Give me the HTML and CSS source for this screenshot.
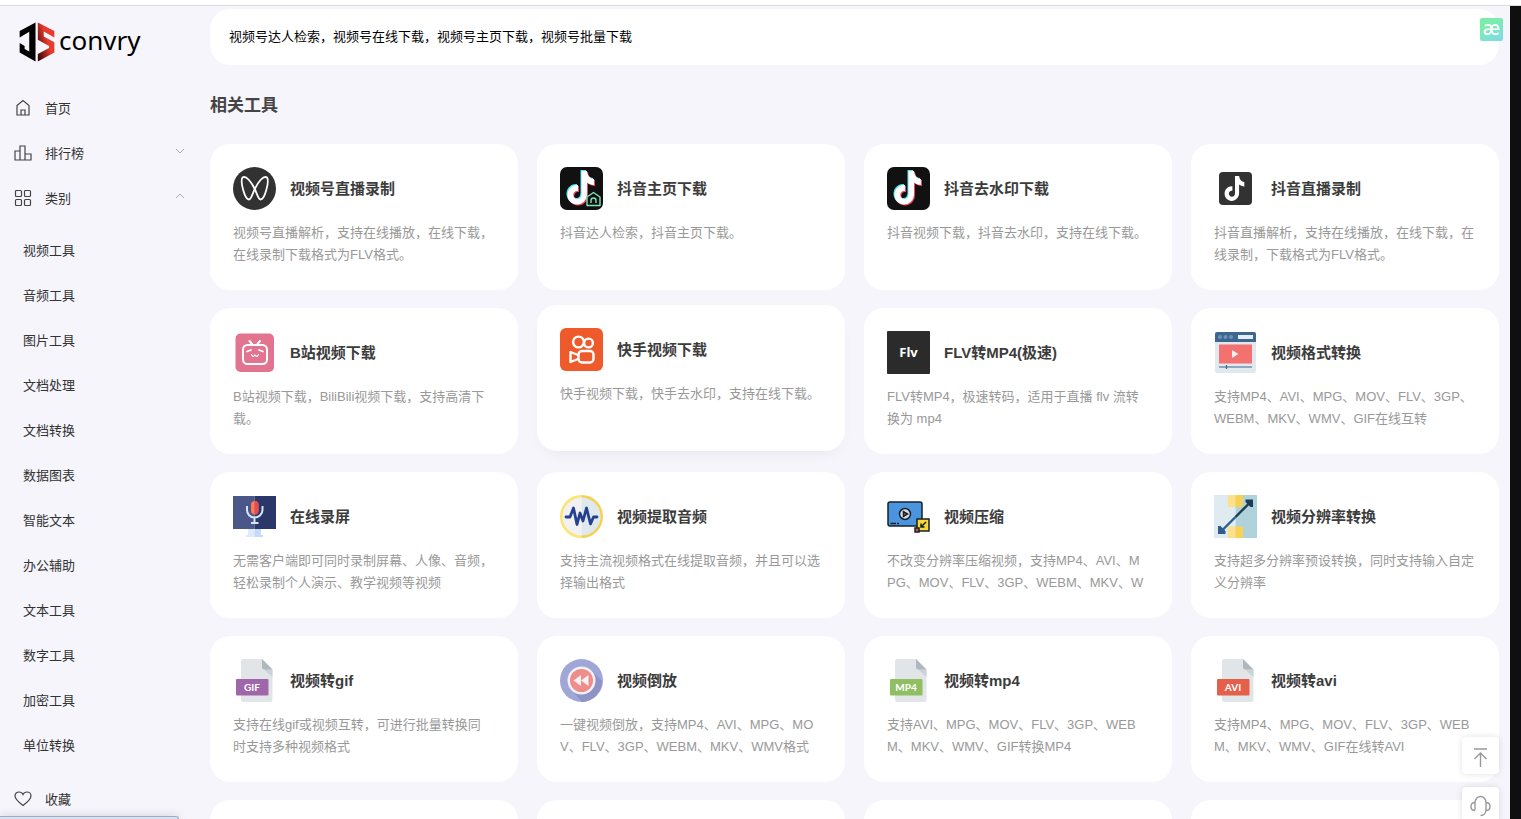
FILE: index.html
```html
<!DOCTYPE html>
<html lang="zh-CN">
<head>
    <meta charset="UTF-8">
    <meta name="viewport" content="width=device-width, initial-scale=1.0">
    <title>convry</title>
    <link rel="stylesheet" href="styles.css">
</head>
<body>

    <!-- Shared shapes -->
    <svg class="defs" width="0" height="0" aria-hidden="true">
        <symbol id="note" viewBox="0 0 43 43">
            <path d="M21.5 4H27C27.5 9 30 11.5 34 12V18C31 18 29 17 27 15.5V27C27 33 22.5 37.5 17 37.5C11.5 37.5 7.5 33 7.5 28C7.5 22 12 17.5 18 18V24C15 23.5 13.3 25.5 13.3 28C13.3 30 15 32 17.3 32C20 32 21.5 30 21.5 27Z"/>
        </symbol>
        <symbol id="douyin" viewBox="0 0 43 43">
            <rect width="43" height="43" rx="7" fill="#111"/>
            <use href="#note" x="-1" y="-1" width="43" height="43" fill="#4de8f4"/>
            <use href="#note" x="1" y="1" width="43" height="43" fill="#f3445a"/>
            <use href="#note" width="43" height="43" fill="#fff"/>
        </symbol>
        <symbol id="file" viewBox="0 0 43 43">
            <path d="M8.500 0H29L39.500 10.500V40.500Q39.500 43 37 43H10.500Q8 43 8 40.500V2.500Q8 0 10.500 0Z" fill="#e2e5e7"/>
            <path d="M31 10.500L39.500 18V10.500Z" fill="#cad1d8"/>
            <path d="M29 0L39.500 10.500H31.500Q29 10.500 29 8Z" fill="#b0b7bd"/>
        </symbol>
    </svg>

    <div class="topline"></div>
    <div class="app">
        <aside class="sidebar">
            <a class="logo" href="#">
                <svg width="36" height="40" viewBox="58 64 109 120">
                    <defs>
                        <linearGradient id="logoRed" x1="1" y1="0.3" x2="0" y2="1">
                            <stop offset="0.35" stop-color="#e93b2c"/>
                            <stop offset="1" stop-color="#200"/>
                        </linearGradient>
                    </defs>
                    <path d="M60 91L108 65V183L60 156V127L75 136V145L89 153V93L60 110Z" fill="#000"/>
                    <path d="M115 65L165 91V110L133 92V107L165 125V156L115 183V160L149 142V136L115 117Z" fill="url(#logoRed)"/>
                </svg>
                <span>convry</span>
            </a>
            <nav class="menu">
                <a class="menu-item" href="#">
                    <svg class="menu-icon" viewBox="0 0 18 18"><path d="M3 6.5L9 1.500L15 6.500V16H3ZM7 16V11H11V16"/></svg>
                    首页
                </a>
                <a class="menu-item" href="#">
                    <svg class="menu-icon" viewBox="0 0 18 18"><path d="M1 7H6V16H1ZM6 2H11V16H6ZM11 10H17V16H11Z"/></svg>
                    排行榜
                    <svg class="arrow" viewBox="0 0 10 6"><path d="M1 1L5 5L9 1"/></svg>
                </a>
                <a class="menu-item" href="#">
                    <svg class="menu-icon" viewBox="0 0 18 18"><rect x="1.500" y="1.500" width="6" height="6" rx="1"/><rect x="10.500" y="1.500" width="6" height="6" rx="1"/><rect x="1.500" y="10.500" width="6" height="6" rx="1"/><rect x="10.500" y="10.500" width="6" height="6" rx="1"/></svg>
                    类别
                    <svg class="arrow" viewBox="0 0 10 6"><path d="M1 5L5 1L9 5"/></svg>
                </a>
                <div class="submenu">
                    <a href="#">视频工具</a>
                    <a href="#">音频工具</a>
                    <a href="#">图片工具</a>
                    <a href="#">文档处理</a>
                    <a href="#">文档转换</a>
                    <a href="#">数据图表</a>
                    <a href="#">智能文本</a>
                    <a href="#">办公辅助</a>
                    <a href="#">文本工具</a>
                    <a href="#">数字工具</a>
                    <a href="#">加密工具</a>
                    <a href="#">单位转换</a>
                </div>
                <a class="menu-item" href="#">
                    <svg class="menu-icon" viewBox="0 0 18 18"><path d="M9 15.5C5 12.5 1 9.5 1 6C1 3.5 3 2 5 2C7 2 8.3 3 9 4.5C9.7 3 11 2 13 2C15 2 17 3.5 17 6C17 9.5 13 12.5 9 15.5Z"/></svg>
                    收藏
                </a>
            </nav>
        </aside>

        <main class="content">
            <div class="intro">视频号达人检索，视频号在线下载，视频号主页下载，视频号批量下载</div>
            <h2>相关工具</h2>
            <div class="tools">
                <a class="card" href="#">
                    <div class="card-head">
                        <svg class="card-icon" viewBox="0 0 43 43">
                            <circle cx="21.5" cy="21.5" r="21.5" fill="#323232"/>
                            <path d="M9.5 10.5C13 8 18.5 15 22 22.5C24.5 28 25.5 32.5 27.5 32.5C32 32.5 36.5 14 34 10.5C30.5 8 25 15 21.5 22.5C19 28 18 32.5 16 32.5C11.5 32.5 7 14 9.5 10.5Z" fill="none" stroke="#fff" stroke-width="1.8"/>
                        </svg>
                        <h3>视频号直播录制</h3>
                    </div>
                    <p>视频号直播解析，支持在线播放，在线下载，在线录制下载格式为FLV格式。</p>
                </a>
                <a class="card" href="#">
                    <div class="card-head">
                        <svg class="card-icon" viewBox="0 0 43 43">
                            <use href="#douyin"/>
                            <path d="M27 30L33.5 25.5L40 30V38.5H27Z" fill="#111" stroke="#7fe3b4" stroke-width="1.4" stroke-linejoin="round"/>
                            <path d="M31 36V33.5Q31 31 33.5 31Q36 31 36 33.5V36" fill="none" stroke="#7fe3b4" stroke-width="1.4"/>
                        </svg>
                        <h3>抖音主页下载</h3>
                    </div>
                    <p>抖音达人检索，抖音主页下载。</p>
                </a>
                <a class="card" href="#">
                    <div class="card-head">
                        <svg class="card-icon" viewBox="0 0 43 43"><use href="#douyin"/></svg>
                        <h3>抖音去水印下载</h3>
                    </div>
                    <p>抖音视频下载，抖音去水印，支持在线下载。</p>
                </a>
                <a class="card" href="#">
                    <div class="card-head">
                        <svg class="card-icon" viewBox="0 0 43 43">
                            <rect x="5" y="5" width="33" height="33" rx="4" fill="#323232"/>
                            <use href="#note" x="5" y="6" width="32" height="32" fill="#fff"/>
                        </svg>
                        <h3>抖音直播录制</h3>
                    </div>
                    <p>抖音直播解析，支持在线播放，在线下载，在线录制，下载格式为FLV格式。</p>
                </a>

                <a class="card" href="#">
                    <div class="card-head">
                        <svg class="card-icon" viewBox="0 0 43 43">
                            <rect x="2.5" y="2.5" width="38.5" height="38.5" rx="5" fill="#e2748f"/>
                            <g fill="none" stroke="#fff" stroke-width="2" stroke-linecap="round" stroke-linejoin="round">
                                <rect x="10" y="14" width="24" height="19" rx="4.5"/>
                                <path d="M16.5 10L19 13M27 10L24.5 13"/>
                                <path d="M14 20.5L18 19M30 20.5L26 19" stroke-width="1.8"/>
                                <path d="M18.5 23.5Q20 27 22 24Q24 27 25.5 23.5" stroke-width="1.2"/>
                            </g>
                        </svg>
                        <h3>B站视频下载</h3>
                    </div>
                    <p>B站视频下载，BiliBili视频下载，支持高清下载。</p>
                </a>
                <a class="card active" href="#">
                    <div class="card-head">
                        <svg class="card-icon" viewBox="0 0 43 43">
                            <rect width="43" height="43" rx="6" fill="#ee5a2a"/>
                            <g fill="none" stroke="#fff" stroke-width="2.4" stroke-linejoin="round">
                                <circle cx="18.5" cy="14" r="5.4"/>
                                <circle cx="28.5" cy="15" r="4.4"/>
                                <rect x="18.5" y="23" width="15" height="11.5" rx="3.5"/>
                                <path d="M18 27L10.5 24V34L18 31"/>
                            </g>
                        </svg>
                        <h3>快手视频下载</h3>
                    </div>
                    <p>快手视频下载，快手去水印，支持在线下载。</p>
                </a>
                <a class="card" href="#">
                    <div class="card-head">
                        <svg class="card-icon" viewBox="0 0 43 43">
                            <rect width="43" height="43" rx="1" fill="#2b2b2b"/>
                            <text class="flv-label" x="21.5" y="25.500" text-anchor="middle">Flv</text>
                        </svg>
                        <h3>FLV转MP4(极速)</h3>
                    </div>
                    <p>FLV转MP4，极速转码，适用于直播 flv 流转换为 mp4</p>
                </a>
                <a class="card" href="#">
                    <div class="card-head">
                        <svg class="card-icon" viewBox="0 0 43 43">
                            <rect x="1" y="1" width="41" height="41" rx="2" fill="#dfe9ee"/>
                            <path d="M3 1H40Q42 1 42 3V11H1V3Q1 1 3 1Z" fill="#3f668e"/>
                            <g fill="#6a94bb"><circle cx="6" cy="6" r="2"/><circle cx="11.5" cy="6" r="2"/><circle cx="17" cy="6" r="2"/></g>
                            <rect x="24" y="4" width="15" height="4" fill="#e6eef3"/>
                            <rect x="5" y="13.5" width="33" height="19" fill="#f3716e"/>
                            <path d="M18 19V27L24.5 23Z" fill="#f4eeee"/>
                            <path d="M5 36H38M12.5 34V38" stroke="#3f668e" stroke-width="1.2"/>
                        </svg>
                        <h3>视频格式转换</h3>
                    </div>
                    <p>支持MP4、AVI、MPG、MOV、FLV、3GP、<wbr><span class="nobreak">WEBM</span>、MKV、WMV、GIF在线互转</p>
                </a>

                <a class="card" href="#">
                    <div class="card-head">
                        <svg class="card-icon" viewBox="0 0 43 43">
                            <path d="M15 34H21.5V42H13V40H15Z" fill="#dfebfb"/>
                            <path d="M21.5 34H28V40H30V42H21.5Z" fill="#c3dafa"/>
                            <path d="M0 1H21.5V34H0Z" fill="#4b5789"/>
                            <path d="M21.5 1H43V34H21.5Z" fill="#2b3768"/>
                            <rect x="18" y="6" width="7.5" height="13.5" rx="3.7" fill="#fa7b55"/>
                            <path d="M21.5 6Q25.5 6 25.5 10V16Q25.5 19.5 21.5 19.5Z" fill="#e44d4c"/>
                            <path d="M14 11V15C14 19 17 22.5 21.5 22.5C26 22.5 29.5 19 29.5 15V11M21.5 22.5V27.5M18 28H25.5" fill="none" stroke="#d4e4fb" stroke-width="2"/>
                        </svg>
                        <h3>在线录屏</h3>
                    </div>
                    <p>无需客户端即可同时录制屏幕、人像、音频，轻松录制个人演示、教学视频等视频</p>
                </a>
                <a class="card" href="#">
                    <div class="card-head">
                        <svg class="card-icon" viewBox="0 0 43 43">
                            <path d="M21.5 1A20.5 20.5 0 0 0 21.5 42Z" fill="#f3f0f3"/>
                            <path d="M21.5 1A20.5 20.5 0 0 1 21.5 42Z" fill="#dfe9ed"/>
                            <path d="M21.5 1.2A20.3 20.3 0 0 0 21.5 41.8" fill="none" stroke="#fbe56b" stroke-width="2.4"/>
                            <path d="M21.5 1.2A20.3 20.3 0 0 1 21.5 41.8" fill="none" stroke="#f4d150" stroke-width="2.4"/>
                            <path d="M6 22H10L13.500 13L17 29.500L20 18L23 26L26.500 13L30.500 29L33.500 22H37" fill="none" stroke="#24418f" stroke-width="2.8" stroke-linejoin="round" stroke-linecap="round"/>
                        </svg>
                        <h3>视频提取音频</h3>
                    </div>
                    <p>支持主流视频格式在线提取音频，并且可以选择输出格式</p>
                </a>
                <a class="card" href="#">
                    <div class="card-head">
                        <svg class="card-icon" viewBox="0 0 43 43">
                            <g stroke="#16202d" stroke-width="1.5">
                                <rect x="1" y="7" width="34" height="24" rx="2" fill="#4b95de"/>
                                <circle cx="18" cy="19" r="5.5" fill="#d9dde2"/>
                                <path d="M16.5 16.5V21.5L20.5 19Z" fill="#e0543b"/>
                                <path d="M3.5 28.5H9M10 28.5H12" fill="none"/>
                                <rect x="30" y="24" width="12" height="12" fill="#f9d937"/>
                                <rect x="28" y="33" width="4" height="4" fill="#e0543b"/>
                                <path d="M39 27L34 32M34 28.5V32H37.5" fill="none"/>
                            </g>
                        </svg>
                        <h3>视频压缩</h3>
                    </div>
                    <p>不改变分辨率压缩视频，支持MP4、AVI、MPG、MOV、FLV、3GP、WEBM、MKV、W</p>
                </a>
                <a class="card" href="#">
                    <div class="card-head">
                        <svg class="card-icon" viewBox="0 0 43 43">
                            <path d="M0 0H21.5V43H0Z" fill="#dfebf0"/>
                            <path d="M21.5 0H43V43H21.5Z" fill="#b0d2da"/>
                            <path d="M14 0H21.5V12H14ZM14 31.5H21.5V43H14Z" fill="#fce08a"/>
                            <path d="M21.5 0H29V12H21.5ZM21.5 31.5H29V43H21.5Z" fill="#f9d155"/>
                            <path d="M6 37.5L21.5 22" fill="none" stroke="#2e5f8c" stroke-width="2.4"/>
                            <path d="M4 31H6.5L11.500 36V39H4Z" fill="#2e5f8c"/>
                            <path d="M21.5 22L37.5 6" fill="none" stroke="#1d3b54" stroke-width="2.4"/>
                            <path d="M31.500 4.500H39V12H36.500L31.500 7Z" fill="#1d3b54"/>
                        </svg>
                        <h3>视频分辨率转换</h3>
                    </div>
                    <p>支持超多分辨率预设转换，同时支持输入自定义分辨率</p>
                </a>

                <a class="card" href="#">
                    <div class="card-head">
                        <svg class="card-icon" viewBox="0 0 43 43">
                            <use href="#file"/>
                            <rect x="3" y="20" width="32.5" height="16.5" rx="1" fill="#a066aa"/>
                            <text class="file-label" x="19" y="32" text-anchor="middle">GIF</text>
                        </svg>
                        <h3>视频转gif</h3>
                    </div>
                    <p>支持在线gif或视频互转，可进行批量转换同时支持多种视频格式</p>
                </a>
                <a class="card" href="#">
                    <div class="card-head">
                        <svg class="card-icon" viewBox="0 0 43 43">
                            <circle cx="21.5" cy="21.5" r="21.5" fill="#9fa6d8"/>
                            <path d="M31 11L42 22A21.5 21.5 0 0 1 22 43L12 31Z" fill="#8d93c4"/>
                            <circle cx="21.5" cy="21.5" r="14" fill="#f3eff3"/>
                            <circle cx="21.5" cy="21.5" r="11.5" fill="#ef8d8b"/>
                            <path d="M21 16V27L13.5 21.5ZM28.5 16V27L21 21.5Z" fill="#f7f0f2"/>
                        </svg>
                        <h3>视频倒放</h3>
                    </div>
                    <p>一键视频倒放，支持MP4、AVI、MPG、MOV、FLV、3GP、WEBM、MKV、WMV格式</p>
                </a>
                <a class="card" href="#">
                    <div class="card-head">
                        <svg class="card-icon" viewBox="0 0 43 43">
                            <use href="#file"/>
                            <rect x="3" y="20" width="32.5" height="16.5" rx="1" fill="#8fbf62"/>
                            <text class="file-label" x="19" y="32" text-anchor="middle">MP4</text>
                        </svg>
                        <h3>视频转mp4</h3>
                    </div>
                    <p>支持AVI、MPG、MOV、FLV、3GP、WEBM、MKV、WMV、GIF转换MP4</p>
                </a>
                <a class="card" href="#">
                    <div class="card-head">
                        <svg class="card-icon" viewBox="0 0 43 43">
                            <use href="#file"/>
                            <rect x="3" y="20" width="32.5" height="16.5" rx="1" fill="#e4604a"/>
                            <text class="file-label" x="19" y="32" text-anchor="middle">AVI</text>
                        </svg>
                        <h3>视频转avi</h3>
                    </div>
                    <p>支持MP4、MPG、MOV、FLV、3GP、WEBM、MKV、WMV、GIF在线转AVI</p>
                </a>

                <div class="card"></div>
                <div class="card"></div>
                <div class="card"></div>
                <div class="card"></div>
            </div>
        </main>
    </div>

    <!-- Floating elements -->
    <div class="badge">æ</div>
    <div class="float-buttons">
        <button type="button" aria-label="返回顶部">
            <svg viewBox="0 0 37 37"><path d="M12 12H25M18.5 30V16M12.5 22L18.5 16L24.5 22"/></svg>
        </button>
        <button type="button" aria-label="客服">
            <svg viewBox="0 0 37 37"><path d="M13 23V15.5C13 12 15.5 9.5 18.5 9.5C21.5 9.5 24 12 24 15.5V23C24 26 22 28.5 18.5 28.5M13 15.5C10.5 15.5 9 17 9 19.5C9 22 10.5 23.5 13 23.5M24 15.5C26.5 15.5 28 17 28 19.5C28 22 26.5 23.5 24 23.5"/></svg>
        </button>
    </div>
    <div class="status"></div>

</body>
</html>
```

FILE: styles.css
```css
/* General styling */
* {
    box-sizing: border-box;
}

body, html {
    margin: 0;
    padding: 0;
    height: 100%;
    overflow: hidden;
}

body {
    display: flex;
    flex-direction: column;
    background: #f5f5fb;
    color: #333;
    font-family: "Liberation Sans", "Noto Sans CJK SC", sans-serif;
    font-size: 13px;
}

a {
    color: inherit;
    text-decoration: none;
}

.defs {
    position: absolute;
}

.topline {
    flex: none;
    height: 6px;
    background: #fff;
    border-bottom: 1px solid #dcdce0;
}

.app {
    flex: 1;
    min-height: 0;
    display: flex;
    overflow: hidden;
    border-right: 11px solid #0f0f0f;
}

/* Sidebar */
.sidebar {
    flex: none;
    width: 210px;
    padding: 16px 25px 0 14px;
}

.logo {
    display: flex;
    align-items: center;
    gap: 4px;
    height: 40px;
    margin: 0 0 23px 5px;
    color: #000;
    font-family: "Noto Sans", sans-serif;
    font-size: 26px;
}

.logo span {
    line-height: 36px;
    padding-bottom: 4px;
}

.menu-item {
    display: flex;
    align-items: center;
    height: 45px;
}

.menu-icon {
    width: 18px;
    height: 18px;
    margin-right: 13px;
    fill: none;
    stroke: #444;
    stroke-width: 1.2;
}

.arrow {
    width: 10px;
    height: 6px;
    margin: 0 0 4px auto;
    fill: none;
    stroke: #aaa;
}

.submenu {
    margin: 8px 0;
}

.submenu a {
    display: block;
    padding-left: 9px;
    line-height: 45px;
}

/* Content */
.content {
    flex: 1;
    min-width: 0;
    padding: 3px 11px 0 0;
}

.intro {
    padding: 0 19px;
    border-radius: 20px;
    background: #fff;
    color: #000;
    line-height: 56px;
}

h2 {
    margin: 28px 0 26px;
    font-size: 17px;
    line-height: 25px;
    color: #444;
}

.tools {
    display: grid;
    grid-template-columns: repeat(4, 1fr);
    gap: 18px 19px;
}

.card {
    min-height: 146px;
    padding: 23px;
    border-radius: 20px;
    background: #fff;
}

.card.active {
    transform: translateY(-3px);
    box-shadow: 0 8px 16px -8px rgba(0, 0, 0, 0.08);
}

.card-head {
    display: flex;
    align-items: center;
    gap: 14px;
}

.card-icon {
    flex: none;
    width: 43px;
    height: 43px;
}

.card h3 {
    margin: 0;
    font-size: 15px;
    line-height: 22px;
    color: #3c3c3c;
}

.card p {
    margin: 12px 2px 0 0;
    color: #999;
    line-height: 22px;
    word-break: break-all;
}

.nobreak {
    white-space: nowrap;
}

.flv-label {
    fill: #fff;
    font: 700 13px "Open Sans", sans-serif;
}

.file-label {
    fill: #fff;
    font: 700 10px Lato, sans-serif;
}

/* Floating elements */
.badge {
    position: fixed;
    top: 18px;
    right: 18px;
    width: 23px;
    height: 23px;
    border-radius: 2px;
    background: linear-gradient(150deg, #7bedaa 30%, #7fd9ee);
    color: #fff;
    font-family: "Noto Sans", sans-serif;
    font-size: 20px;
    font-weight: 500;
    line-height: 20px;
    text-align: center;
}

.float-buttons {
    position: fixed;
    top: 737px;
    right: 22px;
    display: flex;
    flex-direction: column;
    gap: 13px;
}

.float-buttons button {
    width: 37px;
    height: 37px;
    padding: 0;
    border: none;
    border-radius: 4px;
    background: #fff;
    box-shadow: 0 0 6px rgba(0, 0, 0, 0.12);
}

.float-buttons svg {
    display: block;
    fill: none;
    stroke: #999;
    stroke-width: 1.4;
}

.status {
    position: fixed;
    left: 0;
    bottom: 0;
    width: 179px;
    height: 3px;
    border-top: 1px solid #aab;
    border-right: 1px solid #aab;
    border-top-right-radius: 3px;
    background: #d6e4fb;
    box-shadow: 0 0 8px rgba(0, 0, 0, 0.25);
}
```
